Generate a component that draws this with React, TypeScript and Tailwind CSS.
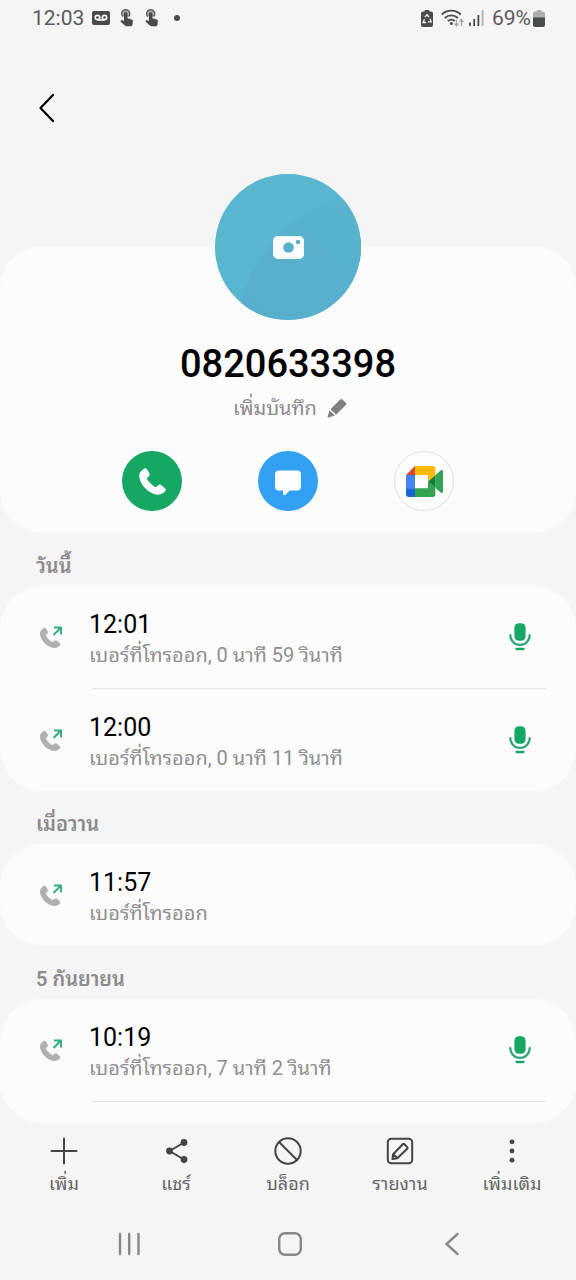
import type { ReactNode } from "react";

type Call = {
  time: string;
  detail: string;
  recorded: boolean;
};

type CallGroup = {
  label: string;
  calls: Call[];
};

const CALL_GROUPS: CallGroup[] = [
  {
    label: "วันนี้",
    calls: [
      { time: "12:01", detail: "เบอร์ที่โทรออก, 0 นาที 59 วินาที", recorded: true },
      { time: "12:00", detail: "เบอร์ที่โทรออก, 0 นาที 11 วินาที", recorded: true },
    ],
  },
  {
    label: "เมื่อวาน",
    calls: [{ time: "11:57", detail: "เบอร์ที่โทรออก", recorded: false }],
  },
  {
    label: "5 กันยายน",
    calls: [
      { time: "10:19", detail: "เบอร์ที่โทรออก, 7 นาที 2 วินาที", recorded: true },
    ],
  },
];

const HANDSET_PATH =
  "M4.500 1C1.500 3-.5 5.500 0 9.200 1.500 18 10 26.500 18.500 27.200c3.700.2 6.700-1.700 8.200-3.700.7-1 .5-2.200-.5-2.900L22.500 17.500c-1.100-.9-2.300-.8-3.200 0l-1.800 1.500c-.7.5-1.500.4-2.200-.2-2.600-1.800-5.300-4.300-7.100-7-.4-.6-.4-1.400.2-2l1.600-1.700c.8-.9.800-2 .1-3L7.800 1.400C6.900.1 5.700.1 4.500 1Z";

function TouchIcon() {
  return (
    <svg viewBox="0 0 13 18" className="h-[18px] w-[13px]" fill="#4a4a4a">
      <path
        d="M2.800 7.400a4 4 0 1 1 5.800 0"
        fill="#a8a8a8"
        stroke="#5c5c5c"
        strokeWidth="1.400"
      />
      <path d="M3.900 5a1.800 1.800 0 0 1 3.600 0v4.200l4.200 1.200c.9.3 1.300.9 1.200 1.800l-.5 3.500c-.1.900-.7 1.500-1.600 1.500H6.300c-.6 0-1-.2-1.400-.6L.4 12.500l.6-.9c.4-.4.900-.5 1.400-.3l1.500.6Z" />
    </svg>
  );
}

function StatusBar() {
  return (
    <div className="flex h-9 shrink-0 items-center justify-between pr-[31px] pl-8 text-[21px] leading-9 text-[#5a5a5a]">
      <div className="flex items-center">
        <span className="w-[60px]">12:03</span>
        <svg viewBox="0 0 18 14" className="h-[14px] w-[18px]">
          <rect width="18" height="14" rx="2" fill="#4a4a4a" />
          <g fill="none" stroke="#f5f5f5" strokeWidth="1.700">
            <circle cx="5.500" cy="6.500" r="2.200" />
            <circle cx="12.500" cy="6.500" r="2.200" />
            <path d="M5.500 9h7" />
          </g>
        </svg>
        <div className="ml-2.5 flex gap-3">
          <TouchIcon />
          <TouchIcon />
        </div>
        <span className="ml-4 size-1.5 rounded-full bg-[#4a4a4a]" />
      </div>
      <div className="flex items-center">
        <svg viewBox="0 0 12 17" className="h-[17px] w-3">
          <path
            d="M3.500 1.500V1a1 1 0 0 1 1-1h3a1 1 0 0 1 1 1v.5H10a2 2 0 0 1 2 2V15a2 2 0 0 1-2 2H2a2 2 0 0 1-2-2V3.500a2 2 0 0 1 2-2Z"
            fill="#4a4a4a"
          />
          <path
            d="M4 7.200 6 4.500l2 2.700M9 8.800l1.200 3H7M5 12.500H2l1.500-3.300"
            fill="none"
            stroke="#f5f5f5"
            strokeWidth="1.300"
          />
        </svg>
        <svg viewBox="0 0 24 18" className="ml-2 h-[18px] w-6">
          <g fill="none" stroke="#4a4a4a" strokeWidth="1.800">
            <path d="M.8 5.500a13.500 13.500 0 0 1 19 0" />
            <path d="M3.800 9a9.300 9.300 0 0 1 13 0" />
            <path d="M6.800 12.200a5 5 0 0 1 7 0" />
          </g>
          <circle cx="10.300" cy="14.500" r="1.500" fill="#4a4a4a" />
          <path
            d="M15.500 10.500v6M13.500 14.500l2 2.200 2-2.200M20.500 17v-6M18.500 12.700l2-2.200 2 2.200"
            fill="none"
            stroke="#a5a5a5"
            strokeWidth="1.300"
          />
        </svg>
        <svg viewBox="0 0 15 16" className="ml-1 h-4 w-[15px]" strokeWidth="1.800">
          <path d="M1 12.500V16M5.200 9v7M9.400 5v11" stroke="#4a4a4a" />
          <path d="M13.600 0v16" stroke="#b0b0b0" />
        </svg>
        <span className="ml-2">69%</span>
        <svg viewBox="0 0 12 17" className="ml-0.5 h-[17px] w-3">
          <path
            d="M3.500 1.500V1a1 1 0 0 1 1-1h3a1 1 0 0 1 1 1v.5H10a2 2 0 0 1 2 2V8H0V3.500a2 2 0 0 1 2-2Z"
            fill="#b0b0b0"
          />
          <path d="M0 7.500h12V15a2 2 0 0 1-2 2H2a2 2 0 0 1-2-2Z" fill="#4a4a4a" />
        </svg>
      </div>
    </div>
  );
}

function AvatarButton() {
  return (
    <button
      type="button"
      aria-label="เพิ่มรูปภาพ"
      className="-mt-[72px] size-[146px] overflow-hidden rounded-full bg-[#58b6cf]"
    >
      <svg viewBox="0 0 146 146" className="size-full">
        <defs>
          <linearGradient id="sheen" x1="0" y1="1" x2="1" y2="0">
            <stop offset="0.35" stopColor="#57afcc" />
            <stop offset="0.7" stopColor="#58b4ce" />
          </linearGradient>
        </defs>
        <circle cx="171" cy="166" r="150" fill="url(#sheen)" />
        <rect x="58" y="62" width="31" height="23" rx="5" fill="#fff" />
        <circle cx="73.500" cy="73.500" r="5.300" fill="#57afcc" />
        <circle cx="83" cy="68" r="2.200" fill="#57afcc" />
      </svg>
    </button>
  );
}

function ContactActions() {
  return (
    <div className="mt-[29px] flex justify-center gap-[76px]">
      <button
        type="button"
        aria-label="โทร"
        className="flex size-[60px] items-center justify-center rounded-full bg-[#16a765]"
      >
        <svg viewBox="0 0 27 27.500" className="size-[27px]" fill="#fff">
          <path d={HANDSET_PATH} />
        </svg>
      </button>
      <button
        type="button"
        aria-label="ข้อความ"
        className="flex size-[60px] items-center justify-center rounded-full bg-[#32a1f3]"
      >
        <svg viewBox="0 0 28 28" className="size-7" fill="#fff">
          <path d="M5 3.500h18a4 4 0 0 1 4 4v12a4 4 0 0 1-4 4h-7.500l-5.500 6c-.5.400-1 .2-1-.5v-5.500H5a4 4 0 0 1-4-4v-12a4 4 0 0 1 4-4Z" />
        </svg>
      </button>
      <button
        type="button"
        aria-label="Google Meet"
        className="flex size-[60px] items-center justify-center rounded-full border border-[#dedede] bg-[#fdfdfd]"
      >
        <svg viewBox="0 0 111 93" className="h-[31px] w-[37px]">
          <path d="M27 27h39v40H27Z" fill="#fff" />
          <path d="M0 27 27 0v27Z" fill="#dc4437" />
          <path d="M0 27h27v40H0Z" fill="#4284f3" />
          <path d="M0 67h27v26H8a8 8 0 0 1-8-8Z" fill="#1a66d2" />
          <path d="M27 0h53a8 8 0 0 1 8 8v20L66 47V27H27Z" fill="#fbbc05" />
          <path d="M27 67h39V47l22 19v19a8 8 0 0 1-8 8H27Z" fill="#34a353" />
          <path d="m88 28 17-15c3-2.500 6-1 6 3v61c0 4-3 5.500-6 3L88 66Z" fill="#34a353" />
          <path d="M88 28v38L66 47Z" fill="#118038" />
        </svg>
      </button>
    </div>
  );
}

function ProfileCard() {
  return (
    <section className="mt-[138px] flex shrink-0 flex-col items-center rounded-[42px] bg-[#fcfcfc] pb-[22px]">
      <AvatarButton />
      <h1 className="mt-[22px] text-[38px] leading-[44px] font-medium text-black">
        0820633398
      </h1>
      <button
        type="button"
        className="mt-2 flex items-center gap-2.5 pl-1 text-[20px] leading-7 text-[#8b8b8b]"
      >
        เพิ่มบันทึก
        <svg viewBox="0 0 20 20" className="size-5" fill="#808080">
          <path d="M13.200 1.500c.7-.7 1.500-.7 2.200 0l3.400 3.300c.7.700.7 1.500 0 2.200L9 16.700 3.500 11.200ZM2.500 12.300l5.300 5.200-6 2c-.8.200-1.300-.3-1.100-1.100Z" />
        </svg>
      </button>
      <ContactActions />
    </section>
  );
}

function OutgoingIcon() {
  return (
    <svg viewBox="0 0 26 26" className="size-[26px] shrink-0">
      <g transform="translate(2 3.500) scale(.75)">
        <path d={HANDSET_PATH} fill="#b0b0b0" />
      </g>
      <path
        d="m15.500 11 7-7M16 3.500h7v7"
        fill="none"
        stroke="#2eb07c"
        strokeWidth="1.900"
      />
    </svg>
  );
}

function MicIcon() {
  return (
    <svg viewBox="0 0 22 28" className="h-7 w-[22px]">
      <rect x="5.400" y=".2" width="11.200" height="17.500" rx="4.500" fill="#16a765" />
      <path
        d="M1.300 12c0 5.500 4 9.800 9.700 9.800s9.700-4.300 9.700-9.800"
        fill="none"
        stroke="#2fa577"
        strokeWidth="2.200"
        strokeLinecap="round"
      />
      <path d="M7.500 26h7" stroke="#16a765" strokeWidth="2.300" strokeLinecap="round" />
    </svg>
  );
}

function CallRow({ call }: { call: Call }) {
  return (
    <li className="flex h-[102px] items-center pr-[45px] pl-[38px]">
      <OutgoingIcon />
      <div className="ml-[25px] flex-1 pt-1">
        <p className="text-[25px] leading-8 text-black">{call.time}</p>
        <p className="text-[20px] leading-7 text-[#8f8f8f]">{call.detail}</p>
      </div>
      {call.recorded ? (
        <button type="button" aria-label="เล่นเสียงที่บันทึก">
          <MicIcon />
        </button>
      ) : null}
    </li>
  );
}

function CallSection({ group, isLast }: { group: CallGroup; isLast: boolean }) {
  return (
    <section className={isLast ? "flex min-h-0 flex-1 flex-col" : "shrink-0"}>
      <h2 className="flex h-[53px] shrink-0 items-center pt-3 pl-9 text-[20px] leading-7 font-semibold text-[#8b8b8b]">
        {group.label}
      </h2>
      <ul className="flex-1 rounded-[42px] bg-[#fcfcfc]">
        {group.calls.map((call, index) => (
          <div key={call.time} className="contents">
            <CallRow call={call} />
            {isLast || index < group.calls.length - 1 ? (
              <li aria-hidden="true" className="mr-[30px] ml-[92px] h-px bg-[#e4e4e4]" />
            ) : null}
          </div>
        ))}
      </ul>
    </section>
  );
}

function ToolbarButton({ label, children }: { label: string; children: ReactNode }) {
  return (
    <button
      type="button"
      className="flex flex-col items-center gap-[7px] text-[18px] leading-6 text-[#666666]"
    >
      <svg
        viewBox="0 0 28 28"
        className="size-7"
        fill="none"
        stroke="#444444"
        strokeWidth="2"
        strokeLinecap="round"
        strokeLinejoin="round"
      >
        {children}
      </svg>
      {label}
    </button>
  );
}

function Toolbar() {
  return (
    <div className="grid shrink-0 grid-cols-5 px-2 pt-3.5 pb-3">
      <ToolbarButton label="เพิ่ม">
        <path d="M14 1.500v25M1.500 14h25" />
      </ToolbarButton>
      <ToolbarButton label="แชร์">
        <path d="M22 5.500 7.500 14 22 22.500" />
        <g fill="#444444" stroke="none">
          <circle cx="22" cy="5.500" r="3.400" />
          <circle cx="7.500" cy="14" r="3.400" />
          <circle cx="22" cy="22.500" r="3.400" />
        </g>
      </ToolbarButton>
      <ToolbarButton label="บล็อก">
        <circle cx="14" cy="14" r="12.700" />
        <path d="m5 5 18 18" />
      </ToolbarButton>
      <ToolbarButton label="รายงาน">
        <rect x="1.800" y="1.800" width="24.400" height="24.400" rx="3.500" />
        <path d="m7 17.500 9.700-10.200c.5-.5 1.200-.5 1.700 0l2.800 2.800c.5.500.5 1.200 0 1.700L11.300 21.300 6.500 22ZM7.500 17.300l3.800 3.800" />
      </ToolbarButton>
      <ToolbarButton label="เพิ่มเติม">
        <g fill="#444444" stroke="none">
          <circle cx="14" cy="4.800" r="2.400" />
          <circle cx="14" cy="14" r="2.400" />
          <circle cx="14" cy="23.200" r="2.400" />
        </g>
      </ToolbarButton>
    </div>
  );
}

function NavigationBar() {
  return (
    <nav className="grid h-[72px] shrink-0 grid-cols-3 place-items-center pr-11 pl-12">
      <button type="button" aria-label="แอปล่าสุด">
        <svg viewBox="0 0 24 24" className="size-6" stroke="#888888" strokeWidth="2.400" strokeLinecap="round">
          <path d="M3 2v20M12.200 2v20M21.500 2v20" />
        </svg>
      </button>
      <button type="button" aria-label="หน้าหลัก">
        <svg viewBox="0 0 24 24" className="size-6" fill="none" stroke="#888888" strokeWidth="2.400">
          <rect x="1.200" y="1.200" width="21.600" height="21.600" rx="6" />
        </svg>
      </button>
      <button type="button" aria-label="ย้อนกลับ">
        <svg
          viewBox="0 0 24 24"
          className="size-6"
          fill="none"
          stroke="#888888"
          strokeWidth="2.400"
          strokeLinecap="round"
        >
          <path d="M18.500 2 7.500 12l11 10" />
        </svg>
      </button>
    </nav>
  );
}

export default function App() {
  return (
    <div className="flex h-screen flex-col overflow-hidden bg-[#f5f5f5] font-[Roboto,'Noto_Sans_Thai_Looped','Noto_Looped_Thai',Loma,Waree,'Noto_Sans',sans-serif]">
      <StatusBar />
      <header className="flex h-[72px] shrink-0 items-end pl-8">
        <button type="button" aria-label="กลับ">
          <svg
            viewBox="0 0 30 30"
            className="-mb-[15px] size-[30px]"
            fill="none"
            stroke="#000"
            strokeWidth="2.200"
            strokeLinecap="round"
            strokeLinejoin="round"
          >
            <path d="M21 2 8.500 15 21 28" />
          </svg>
        </button>
      </header>
      <main className="flex min-h-0 flex-1 flex-col">
        <ProfileCard />
        {CALL_GROUPS.map((group, index) => (
          <CallSection
            key={group.label}
            group={group}
            isLast={index === CALL_GROUPS.length - 1}
          />
        ))}
      </main>
      <Toolbar />
      <NavigationBar />
    </div>
  );
}
